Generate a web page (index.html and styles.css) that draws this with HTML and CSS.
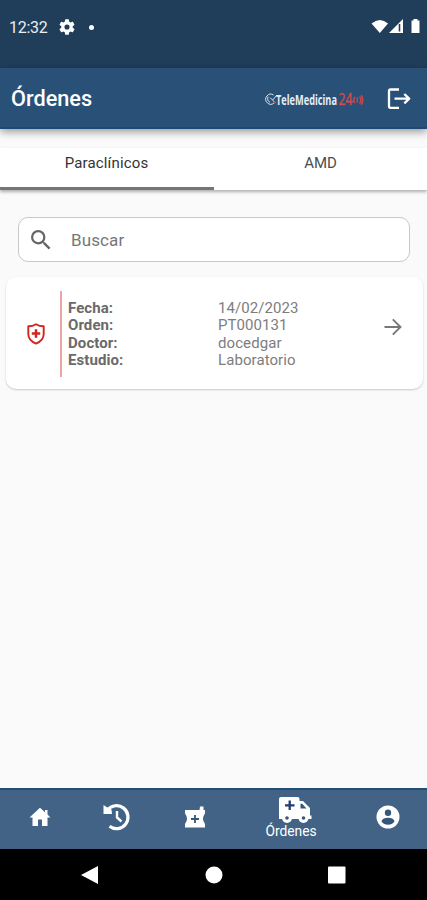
FILE: index.html
```html
<!DOCTYPE html>
<html lang="es">
<head>
<meta charset="utf-8">
<title>Órdenes</title>
<link rel="stylesheet" href="styles.css">
</head>
<body>
<div class="status">
  <span class="clock">12:32</span>
  <svg class="gear" width="16" height="16" viewBox="2 2 20 20"><path fill="#fff" d="M19.14 12.94c.04-.3.06-.61.06-.94 0-.32-.02-.64-.07-.94l2.03-1.58a.49.49 0 0 0 .12-.61l-1.92-3.32a.49.49 0 0 0-.59-.22l-2.39.96c-.5-.38-1.03-.7-1.62-.94l-.36-2.54a.48.48 0 0 0-.48-.41h-3.84a.47.47 0 0 0-.47.41l-.36 2.54c-.59.24-1.13.57-1.62.94l-2.39-.96a.48.48 0 0 0-.59.22L2.74 8.87a.47.47 0 0 0 .12.61l2.03 1.58c-.05.3-.09.63-.09.94s.02.64.07.94l-2.03 1.58a.49.49 0 0 0-.12.61l1.92 3.32c.12.22.37.29.59.22l2.39-.96c.5.38 1.03.7 1.62.94l.36 2.54c.05.24.24.41.48.41h3.84c.24 0 .44-.17.47-.41l.36-2.54c.59-.24 1.13-.56 1.62-.94l2.39.96c.22.08.47 0 .59-.22l1.92-3.32a.47.47 0 0 0-.12-.61zM12 15.2a3.2 3.2 0 1 1 0-6.4 3.2 3.2 0 0 1 0 6.4z"/></svg>
  <span class="dot"></span>
  <svg class="signals" width="50" height="18" viewBox="0 0 50 18">
    <path fill="#fff" d="M.5 5.5Q9 -1.5 17 5.5L8.8 15z"/>
    <path fill="#fff" d="M18 15 32 1V15z"/>
    <path stroke="#203d59" stroke-width="1.6" d="M28.500 6V13.500"/>
    <path fill="#fff" d="M40.5 2.5h2V1h4v1.5h2V15h-8z"/>
  </svg>
</div>
<header class="appbar">
  <h1>Órdenes</h1>
  <svg class="logo" width="102" height="26" viewBox="0 0 102 26">
    <g fill="none" stroke="#dce4ee" stroke-width="1"><path d="M9.500 9A5 5 0 1 0 10 17M4 10.700q-1.200 4 2 5.600M6 11.500l2.600 2.600L13 9"/><path d="M8.600 14.100 11 16.500"/></g>
    <circle cx="10.500" cy="16.500" r="1" fill="#d4504f"/>
    <text class="brand" transform="translate(12 18.5) scale(.67 1)" textLength="91" lengthAdjust="spacingAndGlyphs">TeleMedicina</text>
    <text class="brand24" transform="translate(74.5 19) scale(.72 1)" textLength="19.400" lengthAdjust="spacingAndGlyphs">24</text>
    <g fill="none" stroke="#c94748" stroke-width="1.500"><path d="M91 11q-2.500 3 0 6M93.300 11.500v5M95.500 10.500q3 3.500 0 7M97.300 9.200q3 4.800 0 9.600"/></g>
  </svg>
  <svg class="logout" width="24" height="22" viewBox="0 0 24 22"><path fill="none" stroke="#fff" stroke-width="2.300" stroke-linejoin="round" d="M12 1.500H3.500Q2 1.500 2 3V18.300Q2 19.800 3.500 19.800H12M7.500 10.700H22M17.300 6l4.900 4.700-4.900 4.700"/></svg>
</header>
<nav class="tabs">
  <div class="tab active">Paraclínicos</div>
  <div class="tab">AMD</div>
</nav>
<main>
  <div class="search">
    <svg width="20" height="20" viewBox="3 3 18 18"><path fill="#656565" d="M15.500 14h-.79l-.28-.27A6.470 6.470 0 0 0 16 9.500 6.500 6.500 0 1 0 9.500 16c1.610 0 3.090-.59 4.230-1.570l.27.28v.79l5 4.990L20.490 19zM9.500 14a4.500 4.500 0 1 1 0-9 4.500 4.500 0 0 1 0 9z"/></svg>
    <span>Buscar</span>
  </div>
  <article class="card">
    <svg class="shield" width="20" height="24" viewBox="0 0 20 24"><path fill="none" stroke="#d0271f" stroke-width="1.900" stroke-linejoin="round" d="M10 2.200Q14 4.500 17.700 4.300V12Q17.700 18.500 10 21.600 2.300 18.500 2.300 12V4.300Q6 4.500 10 2.200z"/><path stroke="#d0271f" stroke-width="2.500" d="M5.800 11.500h8.400M10 7.300v8.400"/></svg>
    <dl>
      <dt>Fecha:</dt><dd>14/02/2023</dd>
      <dt>Orden:</dt><dd>PT000131</dd>
      <dt>Doctor:</dt><dd>docedgar</dd>
      <dt>Estudio:</dt><dd>Laboratorio</dd>
    </dl>
    <svg class="arrow" width="18" height="18" viewBox="0 0 18 18"><path fill="none" stroke="#777" stroke-width="1.900" d="M.5 9H16.500M8.800 1.300 16.500 9 8.800 16.700"/></svg>
  </article>
</main>
<nav class="bottom">
  <div class="item"><svg width="24" height="24" viewBox="0 0 24 24"><path fill="#fff" d="M12 2.800 1.500 12.500H4.500V21H10V14.500H14V21H19.500V12.500H22.500L19.500 9.500V5H17V7.200z"/></svg></div>
  <div class="item"><svg width="30" height="30" viewBox="0 0 30 30"><path fill="none" stroke="#fff" stroke-width="3.200" d="M5.500 8A11.500 11.500 0 1 1 7.500 24.300"/><path fill="#fff" d="M1.500 3 4.500 5 9.500 7.500 10 12H1.500z"/><path fill="none" stroke="#fff" stroke-width="2.400" d="M15 9v6.500l4.500 4"/></svg></div>
  <div class="item"><svg width="22" height="24" viewBox="0 0 22 24"><path fill="#fff" d="M1 5H15.500L16 1.500H19.500V5H21V8.500Q17 13.500 21 19V22.500H1V19Q5 13.500 1 8.500z"/><path stroke="#36567b" stroke-width="1.800" d="M7 14h8M11 10v8"/></svg></div>
  <div class="item labelled"><svg width="34" height="28" viewBox="0 0 34 28"><path fill="#fff" d="M3 1H19.500Q21.500 1 21.500 3V5H25L32 12V19.500H33.500V23H1V3Q1 1 3 1z"/><path fill="#36567b" d="M22.500 7.800h1.700L28.500 12.500H22.500z"/><path stroke="#233d70" stroke-width="2.300" d="M7 9.300h9.500M11.700 4.600V14"/><g fill="#fff"><circle cx="9" cy="22" r="5"/><circle cx="25.500" cy="22" r="5"/></g><circle cx="9" cy="22" r="1.800" fill="#36567b"/><circle cx="25.500" cy="22" r="1.800" fill="#36567b"/></svg><span>Órdenes</span></div>
  <div class="item"><svg width="24" height="24" viewBox="0 0 24 24"><circle cx="12" cy="12" r="11.500" fill="#fff"/><circle cx="12" cy="7.800" r="3.200" fill="#36567b"/><path fill="#36567b" d="M5.500 16.500Q6 12.700 12 12.700T18.500 16.500Q16 19.700 12 19.700T5.500 16.500z"/></svg></div>
</nav>
<div class="sysnav">
  <svg width="18" height="20" viewBox="0 0 18 20"><path fill="#fff" d="M0 10 17 1V19z"/></svg>
  <svg width="18" height="20" viewBox="0 0 18 20"><circle cx="9" cy="10" r="8.500" fill="#fff"/></svg>
  <svg width="18" height="20" viewBox="0 0 18 20"><rect y="1.500" width="17.500" height="17" rx="1" fill="#fff"/></svg>
</div>
</body>
</html>
```
FILE: styles.css
```css
* { box-sizing: border-box; }
body {
  margin: 0;
  width: 427px;
  height: 900px;
  display: flex;
  flex-direction: column;
  background: #fafafa;
  font-family: Roboto, sans-serif;
  overflow: hidden;
}
svg { display: block; flex: none; }
.status {
  height: 68px;
  padding: 0 6px 14px 9px;
  display: flex;
  align-items: center;
  background: #203d59;
  color: #fff;
}
.clock { width: 50px; padding-top: 1px; font-size: 16px; letter-spacing: -0.3px; color: #e8edf2; }
.dot { width: 5px; height: 5px; margin-left: 14px; border-radius: 50%; background: #fff; }
.signals { margin-left: auto; }
.appbar {
  height: 61px;
  padding: 2px 16px 0 11px;
  display: flex;
  align-items: center;
  background: #295178;
  border-bottom: 2px solid #1d4a72;
  color: #fff;
  box-shadow: 0 3px 8px rgba(0, 0, 0, .38);
  z-index: 1;
}
h1 { margin: 0 auto 0 0; padding-top: 1px; font-size: 21.7px; font-weight: 500; line-height: 26px; }
.brand { font: bold 14px "Open Sans", sans-serif; fill: #e6edf5; }
.brand24 { font: 17px "Open Sans", sans-serif; fill: #d14b49; stroke: #d14b49; stroke-width: .4px; }
.logo { overflow: visible; }
.logout { margin-left: 21px; }
.tabs {
  height: 42px;
  margin-top: 19px;
  display: flex;
  background: #fff;
  box-shadow: 0 2px 3px rgba(0, 0, 0, .3);
}
.tab {
  flex: 1;
  padding-top: 5px;
  text-align: center;
  font-size: 15px;
  line-height: 20px;
  color: #4a4e50;
}
.tab.active { padding-right: 1px; color: #333; border-bottom: 3px solid #737675; letter-spacing: .15px; }
main { flex: 1; padding: 27px 4px 0 6px; }
.search {
  height: 45px;
  margin: 0 13px 15px 12px;
  padding-left: 12px;
  display: flex;
  align-items: center;
  gap: 20px;
  border: 1px solid #c8c8c8;
  border-radius: 10px;
  background: #fff;
  color: #777;
  font-size: 17px;
  letter-spacing: .1px;
}
.card {
  height: 112px;
  padding: 14px 21px 12px 20px;
  display: flex;
  align-items: center;
  border-radius: 10px;
  background: #fff;
  box-shadow: 0 1px 2px rgba(0, 0, 0, .2);
}
dl {
  width: 300px;
  height: 86px;
  margin: 0 auto 0 14px;
  padding: 8px 0 0 6px;
  display: grid;
  grid-template-columns: 150px 1fr;
  grid-auto-rows: 17.400px;
  align-content: start;
  border-left: 2px solid #eea3a4;
  font-size: 15px;
  line-height: 18.500px;
  letter-spacing: .08px;
}
dt { font-weight: 700; color: #6a6a6a; }
dd { margin: 0; color: #7d7d7d; }
.arrow { margin-bottom: 14px; }
.bottom {
  height: 61px;
  padding: 0 0 5px 1px;
  display: grid;
  grid-template-columns: 77px 78px 77px 116px 78px;
  align-items: center;
  background: #426386;
  border-top: 2px solid #205078;
  color: #fff;
}
.item { display: flex; flex-direction: column; align-items: center; }
.labelled svg { margin-left: 7px; }
.labelled span { font-size: 13.800px; line-height: 14px; }
.sysnav {
  height: 51px;
  padding: 0 81px;
  display: flex;
  align-items: center;
  justify-content: space-between;
  background: #000;
}
```
